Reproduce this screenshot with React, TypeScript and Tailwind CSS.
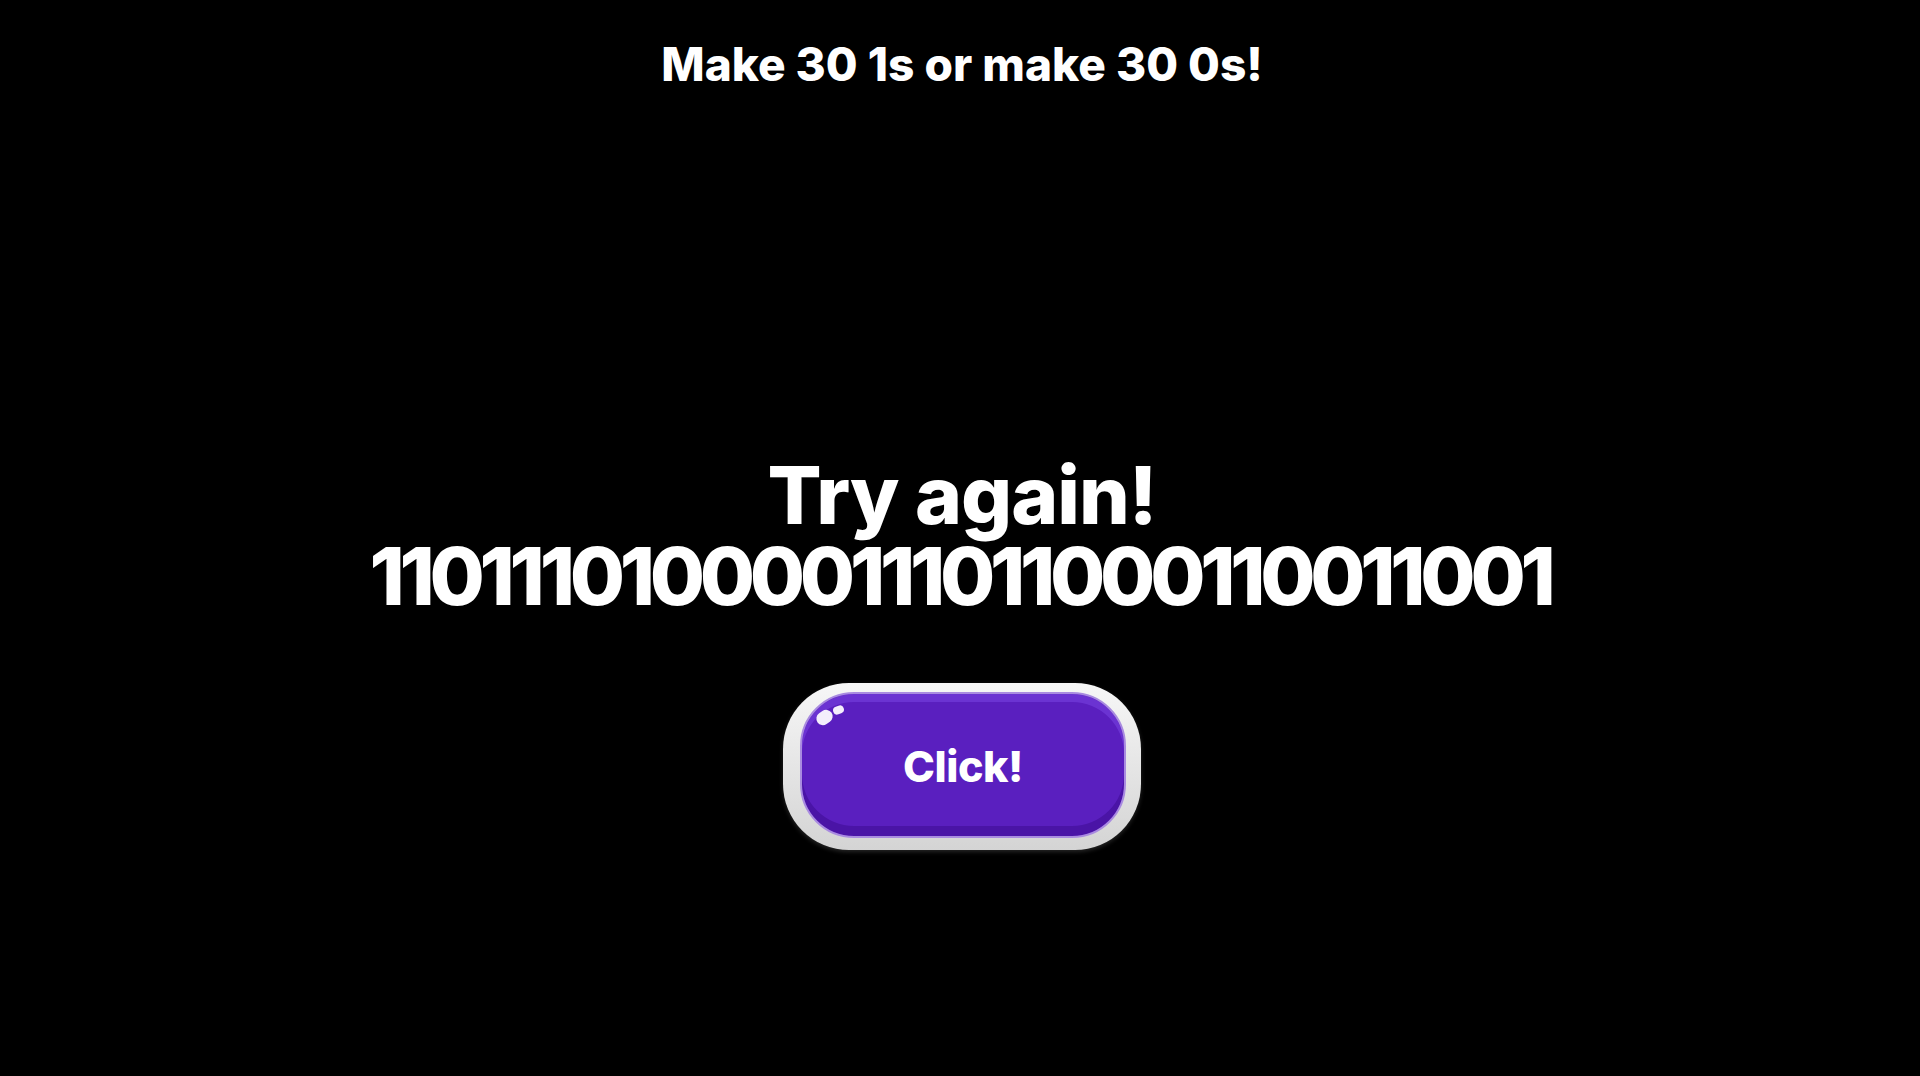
import React from "react";

const BINARY = "110111010000111011000110011001";

export default function App() {
  return (
    <div
      className="w-full h-[1076px] bg-black text-white flex flex-col items-center overflow-hidden"
      style={{ fontFamily: "Inter, Roboto, sans-serif" }}
    >
      <div className="mt-[40px] ml-[4px] h-[48px] text-[46px] leading-[48px] font-extrabold">
        Make 30 1s or make 30 0s!
      </div>

      <div className="mt-[366px] flex flex-col items-center">
        <div className="h-[81px] text-[80px] leading-[81px] font-extrabold tracking-[-1px] ml-[4px]">Try again!</div>
        <div className="h-[81px] text-[80px] leading-[81px] font-extrabold tracking-[-5.3px] ml-[0px] whitespace-nowrap">
          {BINARY}
        </div>
      </div>

      <div className="mt-[67px] ml-[4px] relative w-[358px] h-[167px] rounded-[66px] bg-gradient-to-b from-[#f7f7f7] to-[#d4d4d4] pt-[9px] pl-[17px] pr-[15px] pb-[12px] shadow-[0_2px_4px_rgba(255,255,255,0.15)]">
        <div className="relative w-full h-full rounded-[54px] bg-[#5a1fbf] border-[2px] border-[#a98be0] shadow-[inset_0_8px_0_#6b33d2,inset_0_-10px_0_#4a14a6] flex items-center justify-center">
          <span className="text-[43px] leading-none font-extrabold tracking-[-0.5px] text-white mt-[2px]">Click!</span>
          <div className="absolute left-[14px] top-[17px] w-[17px] h-[13px] rounded-full bg-[#f4eefc] -rotate-[35deg]" />
          <div className="absolute left-[31px] top-[12px] w-[11px] h-[8px] rounded-full bg-[#f4eefc] -rotate-[20deg]" />
        </div>
      </div>
    </div>
  );
}
